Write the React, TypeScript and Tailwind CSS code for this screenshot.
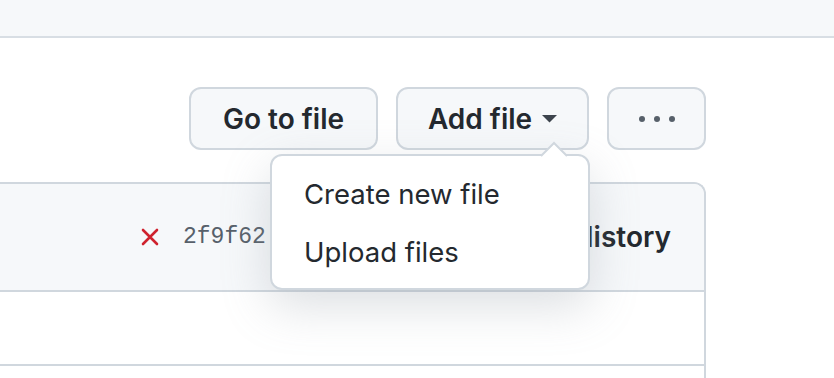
import React from "react";

const AddFileMenu = () => {
  return (
    <div className="absolute left-[-126px] top-[calc(100%+4px)] w-[320px] rounded-[12px] border-2 border-[#d0d7de] bg-white pt-[10px] pb-[6px] shadow-[0_16px_48px_rgba(140,149,159,0.3)] z-10">
      <svg className="absolute left-[268px] top-[-15px]" width="28" height="17" viewBox="0 0 28 17">
        <path d="M0 16 L14 2 L28 16 Z" fill="#ffffff" />
        <path d="M1 15 L14 2 L27 15" fill="none" stroke="#d0d7de" strokeWidth="2" />
      </svg>
      <div className="flex h-[58px] items-center pl-[32px] text-[27.5px] text-[#24292f]">Create new file</div>
      <div className="flex h-[58px] items-center pl-[32px] text-[27.5px] text-[#24292f]">Upload files</div>
    </div>
  );
};

export default function App() {
  return (
    <div className="w-[834px] h-[378px] overflow-hidden bg-white font-['Inter','Liberation_Sans',sans-serif]">
      <div className="h-[38px] bg-[#f6f8fa] border-b-2 border-[#d8dee4]" />

      <div className="flex justify-end gap-[18px] pr-[128px] pt-[49px]">
        <button className="flex h-[63px] w-[189px] items-center justify-center rounded-[12px] border-2 border-[#d0d7de] bg-[#f6f8fa] text-[28px] font-semibold text-[#24292f]">
          Go to file
        </button>
        <div className="relative">
          <button className="flex h-[63px] w-[193px] items-center justify-center gap-[10px] rounded-[12px] border-2 border-[#d0d7de] bg-[#f6f8fa] text-[28px] font-semibold text-[#24292f]">
            Add file
            <svg width="15" height="8" viewBox="0 0 15 8">
              <path d="M0 0 L15 0 L7.5 7.5 Z" fill="#3d444d" />
            </svg>
          </button>
          <AddFileMenu />
        </div>
        <button className="flex h-[63px] w-[99px] items-center justify-center gap-[9px] rounded-[12px] border-2 border-[#d0d7de] bg-[#f6f8fa]">
          <span className="h-[6px] w-[6px] rounded-full bg-[#57606a]" />
          <span className="h-[6px] w-[6px] rounded-full bg-[#57606a]" />
          <span className="h-[6px] w-[6px] rounded-full bg-[#57606a]" />
        </button>
      </div>

      <div className="mt-[32px] mr-[128px] rounded-tr-[12px] border-t-2 border-r-2 border-[#d0d7de]">
        <div className="flex h-[108px] items-center rounded-tr-[10px] border-b-2 border-[#d0d7de] bg-[#f6f8fa] pl-[141px] pr-[33px]">
          <svg width="18" height="18" viewBox="0 0 18 18">
            <path d="M2 2 L16 16 M16 2 L2 16" stroke="#cf222e" strokeWidth="2.6" strokeLinecap="round" />
          </svg>
          <span className="ml-[24px] font-['Liberation_Mono',monospace] text-[23px] text-[#57606a]">2f9f62</span>
          <span className="ml-auto text-[28px] font-semibold text-[#24292f]">History</span>
        </div>
        <div className="h-[74px] border-b-2 border-[#d0d7de]" />
        <div className="h-[40px]" />
      </div>
    </div>
  );
}
